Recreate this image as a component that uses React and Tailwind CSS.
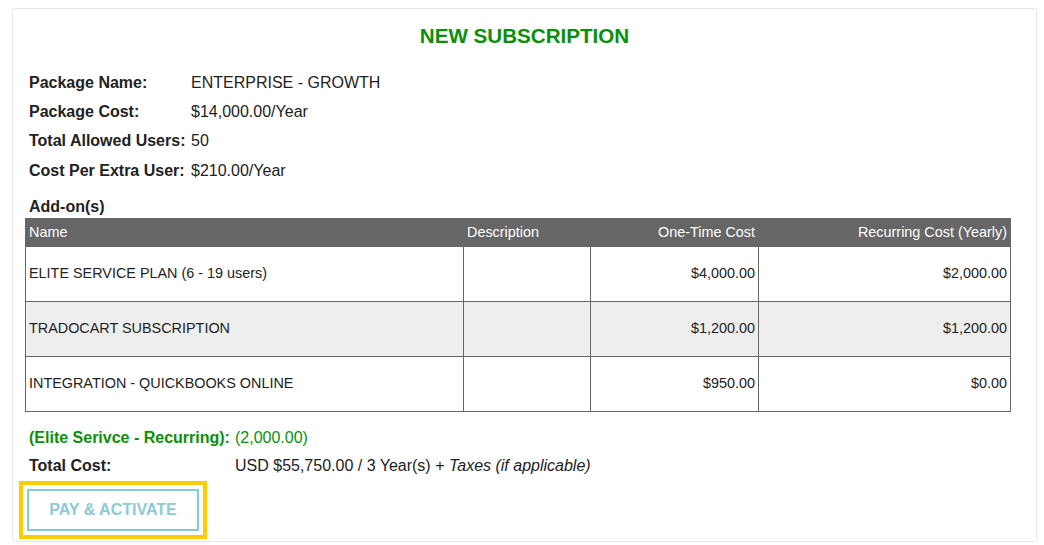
import React from 'react';

const packageInfo = [
  { label: 'Package Name:', value: 'ENTERPRISE - GROWTH' },
  { label: 'Package Cost:', value: '$14,000.00/Year' },
  { label: 'Total Allowed Users:', value: '50' },
  { label: 'Cost Per Extra User:', value: '$210.00/Year' },
];

const addons = [
  { name: 'ELITE SERVICE PLAN (6 - 19 users)', description: '', oneTime: '$4,000.00', recurring: '$2,000.00' },
  { name: 'TRADOCART SUBSCRIPTION', description: '', oneTime: '$1,200.00', recurring: '$1,200.00' },
  { name: 'INTEGRATION - QUICKBOOKS ONLINE', description: '', oneTime: '$950.00', recurring: '$0.00' },
];

const App = () => {
  return (
    <div className="min-h-screen bg-white pl-[12px] pt-[8px] text-[#222] font-['Liberation_Sans',Arial,sans-serif]">
      <div className="w-[1025px] h-[534px] border border-[#e2e8e9] rounded-[3px] pl-[12px]">
        <h1 className="pt-[15px] text-center text-[20.6px] leading-[24px] font-bold text-[#0a8f0a] pr-[12px]">
          NEW SUBSCRIPTION
        </h1>

        <div className="mt-[20px] pl-[4px]">
          {packageInfo.map(item => (
            <div key={item.label} className="flex h-[29.3px] items-center text-[16px]">
              <span className="w-[162px] font-bold">{item.label}</span>
              <span>{item.value}</span>
            </div>
          ))}
        </div>

        <h2 className="mt-[12px] pl-[4px] h-[20px] leading-[20px] text-[16px] font-bold">Add-on(s)</h2>

        <table className="mt-[1px] w-[985px] table-fixed border-collapse text-[14.4px]">
          <colgroup>
            <col className="w-[438px]" />
            <col className="w-[127px]" />
            <col className="w-[168px]" />
            <col className="w-[252px]" />
          </colgroup>
          <thead>
            <tr className="bg-[#666] text-white h-[28px]">
              <th className="text-left font-normal px-[3px] border border-[#666]">Name</th>
              <th className="text-left font-normal px-[3px] border border-[#666]">Description</th>
              <th className="text-right font-normal px-[3px] border border-[#666]">One-Time Cost</th>
              <th className="text-right font-normal px-[3px] border border-[#666]">Recurring Cost (Yearly)</th>
            </tr>
          </thead>
          <tbody>
            {addons.map((row, i) => (
              <tr key={row.name} className={`h-[55px] ${i % 2 === 1 ? 'bg-[#eeeeee]' : 'bg-white'}`}>
                <td className="border border-[#666] px-[3px]">{row.name}</td>
                <td className="border border-[#666] px-[3px]">{row.description}</td>
                <td className="border border-[#666] px-[3px] text-right">{row.oneTime}</td>
                <td className="border border-[#666] px-[3px] text-right">{row.recurring}</td>
              </tr>
            ))}
          </tbody>
        </table>

        <div className="mt-[12px] pl-[4px] text-[16px]">
          <div className="flex h-[28px] items-center text-[#0a8f0a]">
            <span className="w-[206px] font-bold">(Elite Serivce - Recurring):</span>
            <span>(2,000.00)</span>
          </div>
          <div className="flex h-[28px] items-center">
            <span className="w-[206px] font-bold">Total Cost:</span>
            <span>
              USD $55,750.00 / 3 Year(s) + <em>Taxes (if applicable)</em>
            </span>
          </div>
        </div>

        <button className="mt-[9px] ml-[2px] w-[172px] h-[42px] border-2 border-[#85c9d3] bg-white text-[16px] font-bold text-[#8ccad4] outline-[4px] outline-solid outline-[#ffcc00] outline-offset-[4px]">
          PAY &amp; ACTIVATE
        </button>
      </div>
    </div>
  );
};

export default App;
